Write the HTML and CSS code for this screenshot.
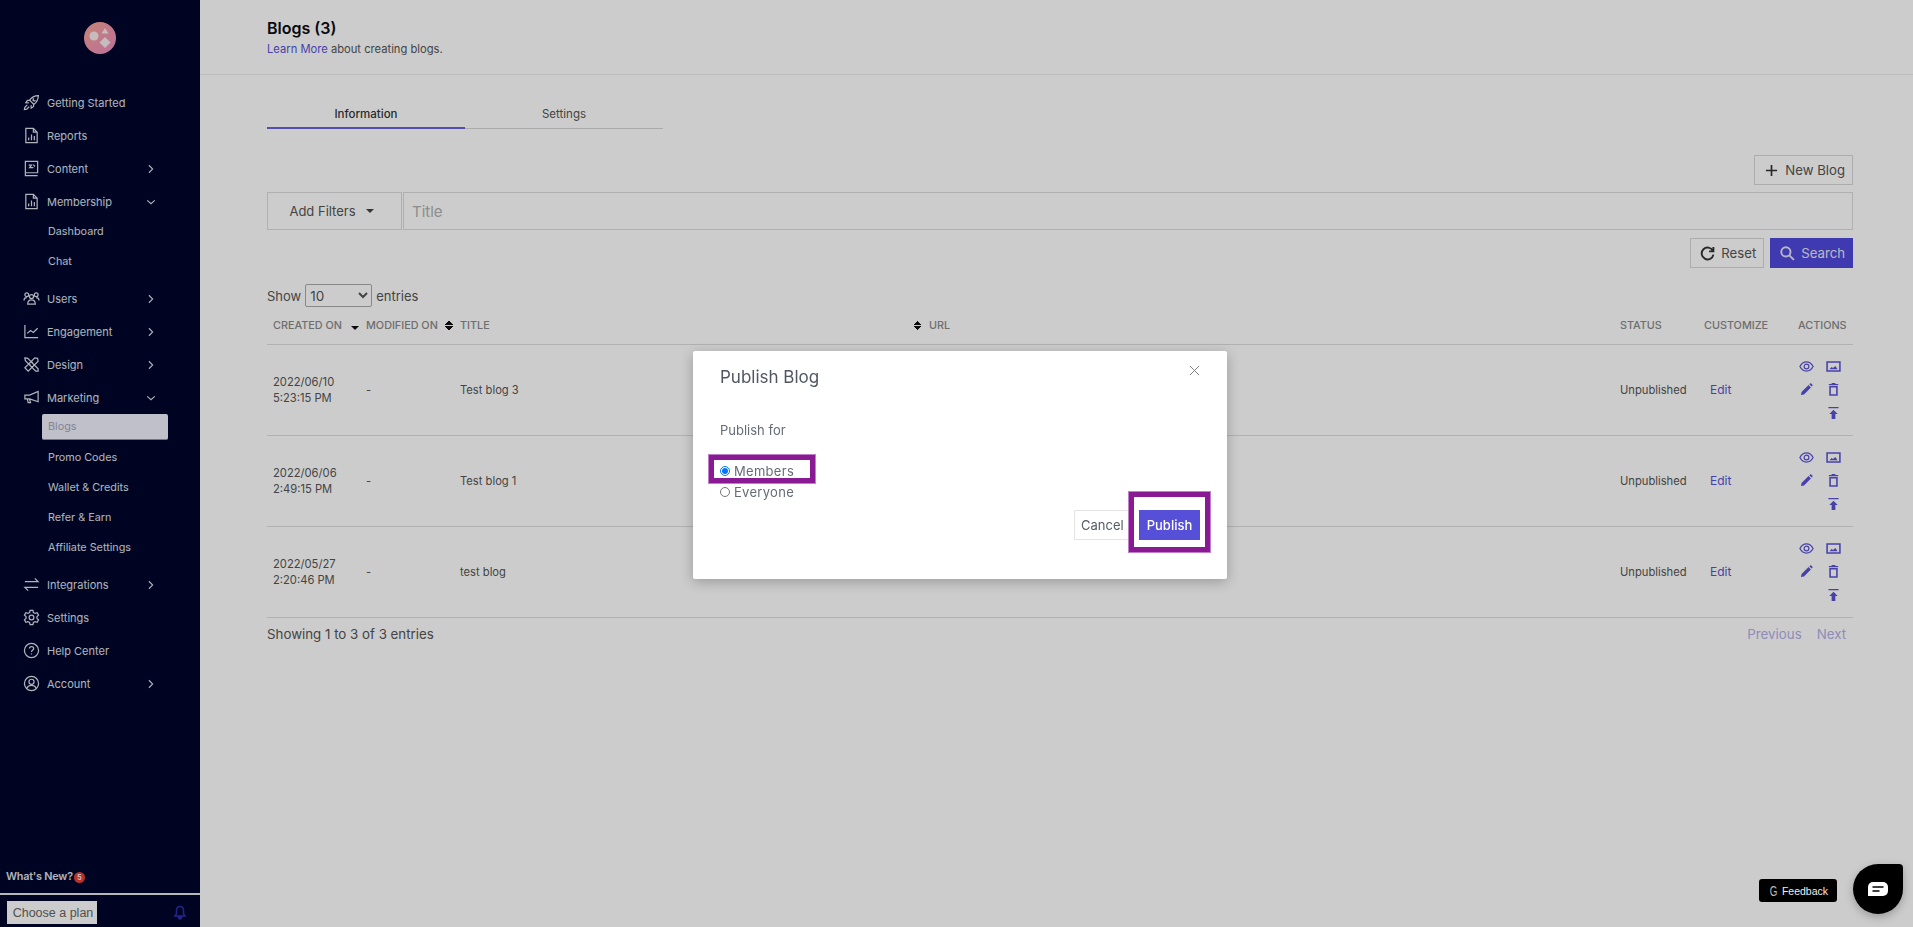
FILE: index.html
```html
<!DOCTYPE html>
<html lang="en">
<head>
  <meta charset="UTF-8" />
  <title>Blogs</title>
  <link rel="stylesheet" href="styles.css">
</head>
<body>

<!-- icon sheet -->
<svg class="icon-sheet" width="0" height="0">
  <symbol id="i-rocket" viewBox="0 0 18 18"><path d="M7 6.500C9 3.500 12 1.800 16.300 1.700 16.200 6 14.500 9 11.500 11L7 6.500ZM7 6.500 4.500 7 3 9.300l3.200.2M11.500 11 11 13.500 8.700 15l-.2-3.200M11.700 5a1.200 1.200 0 1 0 1.300 1.300M4.500 11.500 2 14l-.5 2.500L4 16l2.500-2.500"/></symbol>
  <symbol id="i-file" viewBox="0 0 18 18"><path d="M3 1.500h8l4 4v11H3zM11 1.500v4h4M6 14v-3M9 14V8M12 14v-4.500" /></symbol>
  <symbol id="i-book" viewBox="0 0 18 18"><path d="M2.500 1.500h13v12h-13zM2.500 13.500v3h13M6 5.500h3l-2 2.500h4M11 5l1.500 2" /></symbol>
  <symbol id="i-users" viewBox="0 0 18 18"><circle cx="4" cy="5" r="2"/><circle cx="14" cy="5" r="2"/><circle cx="9" cy="7" r="2.200"/><path d="M1 11c0-2 1.500-3 3-3M17 11c0-2-1.500-3-3-3M5 15c0-3 2-4.500 4-4.500s4 1.500 4 4.500z"/></symbol>
  <symbol id="i-chart" viewBox="0 0 18 18"><path d="M2 2v13.500h14M4.500 11l3.500-3 3 2 4.500-4.500"/></symbol>
  <symbol id="i-design" viewBox="0 0 18 18"><path d="M2 2l3 .5L16 13.500V16h-2.500L2.500 5zM15.500 2.500l-3-.5L2 12.500 5.500 16 16 5.500zM9 6l1.500 1.500M6.500 8.500 8 10"/></symbol>
  <symbol id="i-mega" viewBox="0 0 18 18"><path d="M16 2.500v11L7 10.500H2V6.500h5zM4.500 10.500l1 4h2.500l-1-3.500"/></symbol>
  <symbol id="i-swap" viewBox="0 0 18 18"><path d="M2 6h14l-3.500-3.500M16 12H2l3.500 3.500"/></symbol>
  <symbol id="i-gear" viewBox="0 0 18 18"><circle cx="9" cy="9" r="2.500"/><path d="M7.500 1.500h3l.5 2.200 1.800 1 2.200-.7 1.500 2.600-1.700 1.500v1.800L16.500 11.400 15 14l-2.200-.7-1.800 1-.5 2.200h-3l-.5-2.200-1.800-1L3 14 1.500 11.400l1.700-1.500V8.100L1.500 6.600 3 4l2.200.7 1.800-1z"/></symbol>
  <symbol id="i-help" viewBox="0 0 18 18"><circle cx="9" cy="9" r="7.500"/><path d="M6.800 7c0-1.300 1-2.200 2.300-2.200S11.300 5.700 11.300 7c0 1.800-2.300 1.800-2.300 3.500M9 12.300v.9"/></symbol>
  <symbol id="i-user" viewBox="0 0 18 18"><circle cx="9" cy="9" r="7.500"/><circle cx="9" cy="7.200" r="2.700"/><path d="M4 14c1-2 3-3 5-3s4 1 5 3"/></symbol>
  <symbol id="i-right" viewBox="0 0 12 12"><path d="M3.500 1.500 8 6l-4.500 4.500"/></symbol>
  <symbol id="i-down" viewBox="0 0 12 12"><path d="M1.500 4 6 8l4.500-4"/></symbol>
  <symbol id="i-eye" viewBox="0 0 16 12"><path d="M.8 6C2.500 2.800 5 1 8 1s5.500 1.800 7.200 5C13.500 9.200 11 11 8 11S2.500 9.200.8 6z"/><circle cx="8" cy="6" r="2.600"/></symbol>
  <symbol id="i-image" viewBox="0 0 16 12"><path stroke-width="1.700" d="M1 1h14v10H1z"/><path class="fill" d="M3.500 9 6 6.500l1.500 1.200L10 5.500 12.500 9z"/></symbol>
  <symbol id="i-pencil" viewBox="0 0 14 14"><path class="fill" d="M1 13l.7-3.300 7.500-7.500 2.600 2.600-7.500 7.500zM10 1.400 11 .6c.4-.3.800-.3 1.100 0l1.300 1.300c.3.300.3.700 0 1.100l-.8.900z"/></symbol>
  <symbol id="i-trash" viewBox="0 0 12 14"><path class="fill" d="M1 1h10v1.300H1zM4 0h4v1H4z"/><path stroke-width="1.700" d="M2.300 4h7.400v9H2.300z"/></symbol>
  <symbol id="i-upload" viewBox="0 0 12 14"><path class="fill" d="M.5 0h11v1.400H.5zM6 3l4.500 4.500H8V13H4V7.500H1.500z"/></symbol>
</svg>

<aside class="sidebar">
  <div class="logo">
    <svg width="32" height="32" viewBox="0 0 32 32">
      <defs>
        <linearGradient id="logo-bg" x1="0" y1="0" x2="1" y2="1">
          <stop offset="0" stop-color="#f8a594"/>
          <stop offset="1" stop-color="#ec8cc4"/>
        </linearGradient>
      </defs>
      <circle cx="16" cy="16" r="16" fill="url(#logo-bg)"/>
      <circle cx="10" cy="14" r="4.500" fill="#f7ecee"/>
      <path d="M21 6l3.500 5.500h-7z" fill="#f7ecee"/>
      <path d="M21 15l5.500 5.500-5.500 5.500-5.500-5.500z" fill="#f7ecee"/>
    </svg>
  </div>

  <nav class="nav">
    <a class="nav-item"><svg class="nav-icon"><use href="#i-rocket"/></svg>Getting Started</a>
    <a class="nav-item"><svg class="nav-icon"><use href="#i-file"/></svg>Reports</a>
    <a class="nav-item"><svg class="nav-icon"><use href="#i-book"/></svg>Content<svg class="chev"><use href="#i-right"/></svg></a>
    <a class="nav-item"><svg class="nav-icon"><use href="#i-file"/></svg>Membership<svg class="chev"><use href="#i-down"/></svg></a>
    <div class="subnav">
      <a class="sub-item">Dashboard</a>
      <a class="sub-item">Chat</a>
    </div>
    <a class="nav-item"><svg class="nav-icon"><use href="#i-users"/></svg>Users<svg class="chev"><use href="#i-right"/></svg></a>
    <a class="nav-item"><svg class="nav-icon"><use href="#i-chart"/></svg>Engagement<svg class="chev"><use href="#i-right"/></svg></a>
    <a class="nav-item"><svg class="nav-icon"><use href="#i-design"/></svg>Design<svg class="chev"><use href="#i-right"/></svg></a>
    <a class="nav-item"><svg class="nav-icon"><use href="#i-mega"/></svg>Marketing<svg class="chev"><use href="#i-down"/></svg></a>
    <div class="subnav">
      <a class="sub-item active">Blogs</a>
      <a class="sub-item">Promo Codes</a>
      <a class="sub-item">Wallet &amp; Credits</a>
      <a class="sub-item">Refer &amp; Earn</a>
      <a class="sub-item">Affiliate Settings</a>
    </div>
    <a class="nav-item"><svg class="nav-icon"><use href="#i-swap"/></svg>Integrations<svg class="chev"><use href="#i-right"/></svg></a>
    <a class="nav-item"><svg class="nav-icon"><use href="#i-gear"/></svg>Settings</a>
    <a class="nav-item"><svg class="nav-icon"><use href="#i-help"/></svg>Help Center</a>
    <a class="nav-item"><svg class="nav-icon"><use href="#i-user"/></svg>Account<svg class="chev"><use href="#i-right"/></svg></a>
  </nav>

  <div class="sidebar-foot">
    <div class="whats-new">What's New?<span class="badge">5</span></div>
    <div class="plan-row">
      <button class="plan-btn">Choose a plan</button>
      <svg class="bell" width="14" height="15" viewBox="0 0 14 15"><path d="M7 1.500c-2.300 0-3.500 1.800-3.500 4v3.200L2 11h10l-1.500-2.300V5.500c0-2.200-1.200-4-3.500-4zM5.500 12.500c.3 1 .8 1.500 1.500 1.500s1.200-.5 1.500-1.500z"/></svg>
    </div>
  </div>
</aside>

<main class="main">
  <header class="page-head">
    <h1>Blogs (3)</h1>
    <p><a class="link">Learn More</a> about creating blogs.</p>
  </header>

  <section class="content">
    <div class="tabs">
      <div class="tab active">Information</div>
      <div class="tab">Settings</div>
    </div>

    <div class="new-row">
      <button class="btn"><svg class="btn-icon plus" viewBox="0 0 14 14"><path d="M7 1v12M1 7h12"/></svg>New Blog</button>
    </div>

    <div class="filter-row">
      <button class="add-filters">Add Filters<span class="caret"></span></button>
      <div class="title-input">Title</div>
    </div>

    <div class="search-row">
      <button class="btn"><svg class="btn-icon" viewBox="0 0 14 14"><path d="M12 4.500A5.500 5.500 0 1 0 12.500 8M12.500 1v4h-4"/></svg>Reset</button>
      <button class="btn primary"><svg class="btn-icon" viewBox="0 0 14 14"><circle cx="5.500" cy="5.500" r="4.300"/><path d="M8.700 8.700 13 13"/></svg>Search</button>
    </div>

    <div class="show-row">
      Show
      <select class="entries"><option>10</option></select>
      entries
    </div>

    <table class="blogs">
      <colgroup>
        <col class="c-created"><col class="c-modified"><col class="c-title"><col class="c-url">
        <col class="c-status"><col class="c-custom"><col class="c-actions">
      </colgroup>
      <thead>
        <tr>
          <th><span class="th-in">Created on<span class="sort-down"></span></span></th>
          <th><span class="th-in">Modified on<span class="sort-both"></span></span></th>
          <th><span class="th-in">Title<span class="sort-both"></span></span></th>
          <th>URL</th>
          <th>Status</th>
          <th>Customize</th>
          <th>Actions</th>
        </tr>
      </thead>
      <tbody>
        <tr>
          <td>2022/06/10<br>5:23:15 PM</td>
          <td>-</td>
          <td>Test blog 3</td>
          <td></td>
          <td>Unpublished</td>
          <td><a class="link edit">Edit</a></td>
          <td>
            <div class="actions">
              <svg class="a-wide"><use href="#i-eye"/></svg><svg class="a-wide"><use href="#i-image"/></svg>
              <svg class="a-tall"><use href="#i-pencil"/></svg><svg class="a-tall"><use href="#i-trash"/></svg>
              <span></span><svg class="a-tall"><use href="#i-upload"/></svg>
            </div>
          </td>
        </tr>
        <tr>
          <td>2022/06/06<br>2:49:15 PM</td>
          <td>-</td>
          <td>Test blog 1</td>
          <td></td>
          <td>Unpublished</td>
          <td><a class="link edit">Edit</a></td>
          <td>
            <div class="actions">
              <svg class="a-wide"><use href="#i-eye"/></svg><svg class="a-wide"><use href="#i-image"/></svg>
              <svg class="a-tall"><use href="#i-pencil"/></svg><svg class="a-tall"><use href="#i-trash"/></svg>
              <span></span><svg class="a-tall"><use href="#i-upload"/></svg>
            </div>
          </td>
        </tr>
        <tr>
          <td>2022/05/27<br>2:20:46 PM</td>
          <td>-</td>
          <td>test blog</td>
          <td></td>
          <td>Unpublished</td>
          <td><a class="link edit">Edit</a></td>
          <td>
            <div class="actions">
              <svg class="a-wide"><use href="#i-eye"/></svg><svg class="a-wide"><use href="#i-image"/></svg>
              <svg class="a-tall"><use href="#i-pencil"/></svg><svg class="a-tall"><use href="#i-trash"/></svg>
              <span></span><svg class="a-tall"><use href="#i-upload"/></svg>
            </div>
          </td>
        </tr>
      </tbody>
    </table>

    <div class="table-foot">
      <span>Showing 1 to 3 of 3 entries</span>
      <span class="pager"><a>Previous</a><a>Next</a></span>
    </div>
  </section>
</main>

<!-- Publish modal -->
<div class="overlay">
  <div class="modal">
    <svg class="modal-close" viewBox="0 0 12 12"><path d="M1 1l10 10M11 1 1 11"/></svg>
    <h2>Publish Blog</h2>
    <p class="modal-label">Publish for</p>
    <label class="radio-row"><input type="radio" name="pub" checked>Members</label>
    <label class="radio-row"><input type="radio" name="pub">Everyone</label>
    <div class="modal-foot">
      <button class="btn-cancel">Cancel</button>
      <button class="btn-publish">Publish</button>
    </div>
    <div class="mark mark-members"></div>
    <div class="mark mark-publish"></div>
  </div>
</div>

<div class="feedback"><span class="g">G</span>Feedback</div>
<div class="chat">
  <svg width="20" height="14" viewBox="0 0 20 14"><path d="M5 0h10a5 5 0 0 1 5 5v4a5 5 0 0 1-5 5H0V5a5 5 0 0 1 5-5z" fill="#fff"/><path d="M4.500 5h11M4.500 9h7" stroke="#000" stroke-width="1.400"/></svg>
</div>

</body>
</html>
```

FILE: styles.css
```css
* { box-sizing: border-box; }

body {
  margin: 0;
  height: 100vh;
  overflow: hidden;
  display: flex;
  background: #fff;
  color: #3d3f4a;
  font-family: Inter, "Liberation Sans", sans-serif;
  font-size: 12px;
}

button { font-family: inherit; }

.icon-sheet { position: absolute; }

symbol { fill: none; stroke: currentColor; stroke-width: 1.300; }
symbol .fill { fill: currentColor; stroke: none; }

/* sidebar */
.sidebar {
  width: 200px;
  flex: none;
  display: flex;
  flex-direction: column;
  background: #00062c;
  color: #dfe0ea;
}

.logo {
  display: flex;
  justify-content: center;
  padding-top: 22px;
  height: 86px;
}

.nav-item {
  display: flex;
  align-items: center;
  height: 33px;
  padding: 0 44px 0 23px;
  gap: 7px;
  font-size: 11px;
}

.nav-icon {
  width: 17px;
  height: 17px;
  flex: none;
}

.chev {
  width: 10px;
  height: 10px;
  margin-left: auto;
  stroke-width: 1.500;
}

.subnav {
  display: flex;
  flex-direction: column;
  gap: 4px;
  margin: 0 0 8px;
}

.sub-item {
  display: flex;
  align-items: center;
  height: 26px;
  width: 126px;
  margin-left: 42px;
  padding-left: 6px;
  font-size: 10.800px;
  border-radius: 2px;
}

.sub-item.active {
  background: #f0f0fd;
  color: #a4a6b8;
  border-bottom: 1px solid #8f92ab;
}

.sidebar-foot {
  margin-top: auto;
}

.whats-new {
  display: flex;
  align-items: center;
  padding-left: 6px;
  height: 20px;
  font-size: 10.800px;
  font-weight: 600;
  letter-spacing: -0.2px;
}

.badge {
  width: 11px;
  height: 11px;
  margin-left: 1px;
  margin-top: 2px;
  border-radius: 50%;
  background: #ee3a36;
  color: #fff;
  font-size: 7px;
  line-height: 11px;
  text-align: center;
}

.plan-row {
  display: flex;
  align-items: flex-end;
  justify-content: space-between;
  height: 34px;
  margin-top: 7px;
  padding: 0 13px 3px 7px;
  border-top: 2px solid #e6e6e6;
}

.plan-btn {
  width: 90px;
  height: 23px;
  padding: 0 0 0 2px;
  border: 0;
  background: #fff;
  color: #666;
  font-family: "Liberation Sans", sans-serif;
  font-size: 12.500px;
}

.bell {
  margin-bottom: 4px;
  fill: none;
  stroke: #2f2db0;
  stroke-width: 1.500;
}

/* main */
.main {
  flex: 1;
  min-width: 0;
}

.page-head {
  height: 75px;
  padding: 18px 0 0 67px;
  border-bottom: 1px solid #ececec;
}

.page-head h1 {
  margin: 0;
  font-size: 16px;
  line-height: 20px;
  font-weight: 600;
  color: #0c0c12;
}

.page-head p {
  margin: 4px 0 0;
  font-size: 11.200px;
  line-height: 14px;
  color: #555;
}

.link { color: #5a52d5; }

.content {
  padding: 28px 60px 0 67px;
}

.tabs {
  display: flex;
  width: 396px;
  border-bottom: 1px solid #d6d6d6;
}

.tab {
  flex: 1;
  height: 26px;
  line-height: 23px;
  margin-bottom: -1px;
  text-align: center;
  font-size: 11.500px;
  color: #555;
}

.tab.active {
  color: #333;
  font-weight: 500;
  border-bottom: 2px solid #6a63d8;
}

.new-row {
  display: flex;
  justify-content: flex-end;
  margin-top: 26px;
}

.btn {
  display: flex;
  align-items: center;
  gap: 6px;
  height: 30px;
  padding: 0 7px 0 9px;
  border: 1px solid #d8d8d8;
  background: #fff;
  color: #555;
  font-size: 13.200px;
}

.btn-icon {
  width: 15px;
  height: 15px;
  fill: none;
  stroke: #333;
  stroke-width: 1.800;
}

.btn-icon.plus {
  width: 13px;
  height: 13px;
  margin: 0 1px 0 1px;
}

.btn.primary {
  background: #5149dc;
  border-color: #5149dc;
  color: #e6e6f6;
}

.btn.primary .btn-icon { stroke: #e6e6f6; }

.filter-row {
  display: flex;
  gap: 1px;
  margin-top: 7px;
}

.add-filters {
  display: flex;
  align-items: center;
  justify-content: center;
  gap: 10px;
  width: 135px;
  height: 38px;
  padding-right: 12px;
  border: 1px solid #dcdcdc;
  background: #fff;
  color: #555;
  font-size: 13px;
}

.caret {
  border: 4px solid transparent;
  border-top: 4px solid #444;
  border-bottom: 0;
}

.title-input {
  flex: 1;
  height: 38px;
  padding-left: 8px;
  line-height: 37px;
  border: 1px solid #dcdcdc;
  font-size: 15px;
  color: #b0b0b0;
}

.search-row {
  display: flex;
  justify-content: flex-end;
  gap: 6px;
  margin-top: 8px;
}

.show-row {
  display: flex;
  align-items: center;
  gap: 4px;
  margin-top: 16px;
  height: 23px;
  font-size: 13px;
  color: #555;
}

.entries {
  width: 67px;
  height: 23px;
  padding-left: 0;
  border: 1px solid #aaa;
  border-radius: 2px;
  background: #fff;
  color: #555;
  font-family: inherit;
  font-size: 13.500px;
}

/* table */
.blogs {
  width: 100%;
  margin-top: 3px;
  table-layout: fixed;
  border-collapse: collapse;
  font-size: 11.200px;
}

.c-created { width: 92px; }
.c-modified { width: 94px; }
.c-title { width: 469px; }
.c-url { width: 691px; }
.c-status { width: 84px; }
.c-custom { width: 94px; }
.c-actions { width: 62px; }

.blogs th {
  height: 34px;
  padding: 1px 0 4px 7px;
  border-bottom: 1px solid #dedede;
  font-size: 10.800px;
  font-weight: 500;
  text-align: left;
  text-transform: uppercase;
  color: #8a8a8a;
  white-space: nowrap;
}

.blogs th:first-child,
.blogs td:first-child { padding-left: 6px; }

.th-in {
  display: flex;
  align-items: center;
  justify-content: space-between;
}

.sort-down {
  border: 4px solid transparent;
  border-top: 4px solid #111;
  border-bottom: 0;
  margin-top: 5px;
}

.sort-both {
  width: 8px;
  height: 9px;
  background:
    linear-gradient(to bottom right, transparent 50%, #111 50%) left top / 4px 4px no-repeat,
    linear-gradient(to bottom left, transparent 50%, #111 50%) right top / 4px 4px no-repeat,
    linear-gradient(to top right, transparent 50%, #111 50%) left bottom / 4px 4px no-repeat,
    linear-gradient(to top left, transparent 50%, #111 50%) right bottom / 4px 4px no-repeat;
}

.blogs td {
  height: 91px;
  padding: 0 0 0 7px;
  border-bottom: 1px solid #dedede;
  line-height: 16px;
  color: #555;
}

.edit {
  padding-left: 6px;
  font-size: 12px;
}

.actions {
  display: grid;
  grid-template-columns: 16px 16px;
  grid-auto-rows: 24px;
  column-gap: 11px;
  justify-items: center;
  align-items: center;
  color: #5a52d5;
}

.a-wide { width: 15px; height: 11px; margin-top: 2px; }
.a-tall { width: 13px; height: 13px; }

.table-foot {
  display: flex;
  justify-content: space-between;
  align-items: center;
  margin-top: 8px;
  font-size: 13.300px;
  color: #555;
}

.pager {
  display: flex;
  gap: 15px;
  padding-right: 7px;
  color: #b3b0ea;
}

/* modal */
.overlay {
  position: fixed;
  inset: 0;
  z-index: 10;
  display: flex;
  justify-content: center;
  align-items: flex-start;
  padding: 351px 0 0 7px;
  background: rgba(0, 0, 0, 0.2);
}

.modal {
  position: relative;
  width: 534px;
  height: 228px;
  padding: 15px 28px 0 27px;
  background: #fff;
  border-radius: 2px;
  box-shadow: 0 3px 14px rgba(0, 0, 0, 0.25);
  color: #4f5563;
}

.modal h2 {
  margin: 0;
  font-size: 17px;
  line-height: 22px;
  font-weight: 400;
}

.modal-close {
  position: absolute;
  top: 14px;
  right: 27px;
  width: 11px;
  height: 11px;
  fill: none;
  stroke: #777;
}

.modal-label {
  margin: 34px 0 22px;
  font-size: 13px;
  line-height: 16px;
  color: #666b77;
}

.radio-row {
  display: flex;
  align-items: center;
  gap: 4px;
  height: 21px;
  font-size: 13px;
  letter-spacing: 0.3px;
  color: #666b77;
}

.radio-row input {
  width: 10px;
  height: 10px;
  margin: 0;
}

.modal-foot {
  display: flex;
  justify-content: flex-end;
  margin: 8px -1px 0 0;
}

.btn-cancel {
  width: 57px;
  height: 30px;
  padding: 0 0 0 6px;
  border: 1px solid #e4e4e4;
  background: #fff;
  color: #555b66;
  font-size: 13px;
  text-align: left;
}

.btn-publish {
  width: 61px;
  height: 30px;
  margin-left: 8px;
  padding: 0;
  border: 0;
  background: #5650d8;
  color: #fff;
  font-size: 13px;
  font-weight: 500;
}

/* purple callouts from the screenshot author */
.mark {
  position: absolute;
  border: 5px solid #8a1a94;
  box-shadow: 0 0 0 1px #c07fca;
}

.mark-members {
  left: 16px;
  top: 104px;
  width: 106px;
  height: 28px;
}

.mark-publish {
  left: 436px;
  top: 141px;
  width: 81px;
  height: 60px;
}

/* floating widgets */
.feedback {
  position: fixed;
  right: 76px;
  bottom: 25px;
  z-index: 20;
  display: flex;
  align-items: center;
  gap: 3px;
  width: 78px;
  height: 23px;
  padding-left: 9px;
  background: #000;
  border-radius: 3px;
  color: #eee;
  font-family: "Liberation Sans", sans-serif;
  font-size: 10.500px;
}

.feedback .g {
  font-size: 14px;
  color: #bbb;
  transform: scaleX(0.7);
}

.chat {
  position: fixed;
  right: 10px;
  bottom: 13px;
  z-index: 20;
  display: flex;
  align-items: center;
  justify-content: center;
  width: 50px;
  height: 50px;
  background: #000;
  border-radius: 50% 4px 50% 50%;
  box-shadow: 0 3px 8px rgba(0, 0, 0, 0.25);
}
```
